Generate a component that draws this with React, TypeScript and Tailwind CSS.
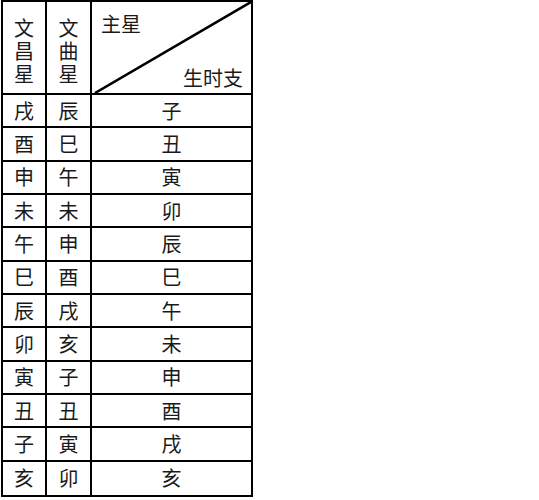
import React from "react";

const rows: [string, string, string][] = [
  ["戌", "辰", "子"],
  ["酉", "巳", "丑"],
  ["申", "午", "寅"],
  ["未", "未", "卯"],
  ["午", "申", "辰"],
  ["巳", "酉", "巳"],
  ["辰", "戌", "午"],
  ["卯", "亥", "未"],
  ["寅", "子", "申"],
  ["丑", "丑", "酉"],
  ["子", "寅", "戌"],
  ["亥", "卯", "亥"],
];

export default function App() {
  return (
    <div className="w-[539px] h-[500px] bg-white">
      <div
        className="ml-px w-[252px] h-[497px] border-2 border-black grid grid-cols-[44px_45px_minmax(0,1fr)] grid-rows-[93px_repeat(12,minmax(0,1fr))] text-[20px] leading-none text-[#1a1a1a] font-normal"
        style={{ fontFamily: '"Noto Sans CJK SC", "Noto Sans CJK JP", sans-serif' }}
      >
        <div className="border-r-2 border-b-2 border-black flex items-center justify-center pt-[6px]">
          <p className="w-[1em] break-all text-center leading-[23px]">文昌星</p>
        </div>
        <div className="border-r-2 border-b-2 border-black flex items-center justify-center pt-[6px]">
          <p className="w-[1em] break-all text-center leading-[23px]">文曲星</p>
        </div>
        <div className="relative border-b-2 border-black flex flex-col justify-between pl-[9px] pr-[8px] pt-[12px] pb-[5px]">
          <svg className="absolute inset-0 w-full h-full" viewBox="0 0 159 91" preserveAspectRatio="none">
            <line x1="3" y1="91" x2="159" y2="0" stroke="black" strokeWidth="2.6" />
          </svg>
          <span>主星</span>
          <span className="self-end">生时支</span>
        </div>
        {rows.map((r, i) => {
          const last = i === rows.length - 1;
          const bb = last ? "" : "border-b-2";
          return (
            <React.Fragment key={i}>
              <div className={`border-r-2 ${bb} border-black flex items-center justify-center`}>{r[0]}</div>
              <div className={`border-r-2 ${bb} border-black flex items-center justify-center`}>{r[1]}</div>
              <div className={`${bb} border-black flex items-center justify-center`}>{r[2]}</div>
            </React.Fragment>
          );
        })}
      </div>
    </div>
  );
}
